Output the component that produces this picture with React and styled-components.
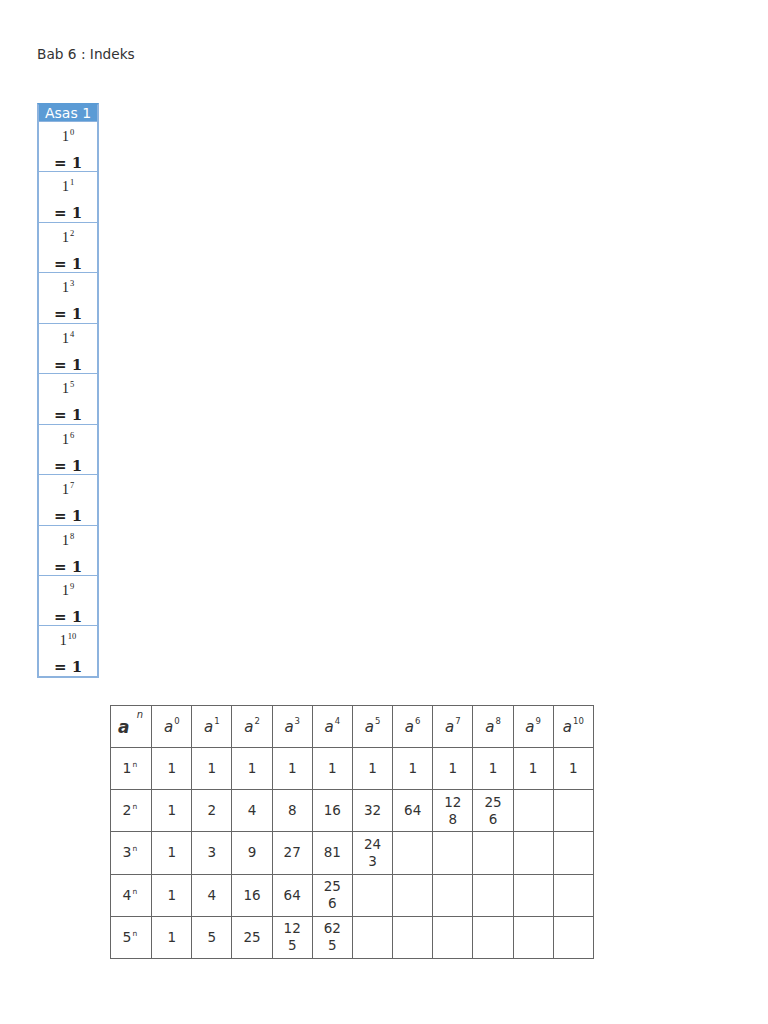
import React from 'react'
import styled, { createGlobalStyle } from 'styled-components'

const GlobalStyle = createGlobalStyle`
  body {
    margin: 0;
    background: #fff;
    font-family: "DejaVu Sans", Verdana, sans-serif;
    color: #333;
  }
`

const Page = styled.div`
  width: 768px;
  min-height: 1024px;
  padding: 46px 0 0 37px;
  box-sizing: border-box;
`

const Title = styled.div`
  font-size: 13.7px;
  line-height: 16px;
  color: #333;
`

const Asas = styled.div`
  margin-top: 41px;
  width: 62px;
  box-sizing: border-box;
  border: 2px solid #8db3de;
  border-top-color: #5b9bd5;
  display: flex;
  flex-direction: column;
`

const AsasHead = styled.div`
  background: #5b9bd5;
  color: #fff;
  font-size: 14px;
  height: 16px;
  line-height: 16px;
  text-align: center;
`

const AsasRow = styled.div`
  height: 50.45px;
  box-sizing: border-box;
  border-top: 1.5px solid #8db3de;
  display: flex;
  flex-direction: column;
  align-items: center;
  color: #222;
`

const Power = styled.div`
  font-size: 14px;
  line-height: 16px;
  padding-top: 2px;
  font-family: "Liberation Serif", serif;
`

const Sup = styled.sup`
  font-size: 8.5px;
  vertical-align: 6px;
  margin-left: 1px;
`

const Result = styled.div`
  font-family: "DejaVu Serif", "Liberation Serif", serif;
  font-weight: bold;
  font-size: 15px;
  line-height: 18px;
  margin-top: 9px;
`

const GridTable = styled.table`
  margin: 27px 0 0 73px;
  border-collapse: collapse;
  table-layout: fixed;
  width: 484px;
  border: 1px solid #555;
`

const Cell = styled.td`
  width: ${p => (p.$first ? 41 : 40)}px;
  height: 42.2px;
  border: 1px solid #666;
  padding: 0 7px;
  box-sizing: border-box;
  text-align: center;
  vertical-align: middle;
  font-size: 13.5px;
  line-height: 17px;
  word-break: break-all;
  color: #333;
`

const HeadCell = styled(Cell)`
  font-style: italic;
  font-size: 15px;
  padding: 0 0 4px;
`

const CornerCell = styled(Cell)`
  padding: 0;
  position: relative;
`

const CornerA = styled.span`
  position: absolute;
  left: 7px;
  top: 13px;
  font-weight: bold;
  font-style: italic;
  font-size: 17px;
`

const CornerN = styled.span`
  position: absolute;
  right: 8px;
  top: 0;
  font-style: italic;
  font-size: 10px;
`

const HeadSup = styled.sup`
  font-size: 8.5px;
  font-style: normal;
  vertical-align: 8px;
  margin-left: 1px;
`

const RowHead = styled(Cell)`
  text-align: right;
  padding: 0 14px 4px 0;
  font-size: 14px;
`

const RowSup = styled.sup`
  font-size: 7.5px;
  vertical-align: 6px;
  margin-left: 1px;
`

const rows = [
  ['1', '1', '1', '1', '1', '1', '1', '1', '1', '1', '1'],
  ['1', '2', '4', '8', '16', '32', '64', '128', '256', '', ''],
  ['1', '3', '9', '27', '81', '243', '', '', '', '', ''],
  ['1', '4', '16', '64', '256', '', '', '', '', '', ''],
  ['1', '5', '25', '125', '625', '', '', '', '', '', ''],
]

export default function App() {
  const exps = Array.from({ length: 11 }, (_, i) => i)
  return (
    <Page>
      <GlobalStyle />
      <Title>Bab 6 : Indeks</Title>

      <Asas>
        <AsasHead>Asas 1</AsasHead>
        {exps.map(n => (
          <AsasRow key={n}>
            <Power>
              1<Sup>{n}</Sup>
            </Power>
            <Result>= 1</Result>
          </AsasRow>
        ))}
      </Asas>

      <GridTable>
        <tbody>
          <tr>
            <CornerCell $first>
              <CornerA>a</CornerA>
              <CornerN>n</CornerN>
            </CornerCell>
            {exps.map(n => (
              <HeadCell key={n}>
                a<HeadSup>{n}</HeadSup>
              </HeadCell>
            ))}
          </tr>
          {rows.map((r, i) => (
            <tr key={i}>
              <RowHead $first>
                {i + 1}
                <RowSup>n</RowSup>
              </RowHead>
              {r.map((v, j) => (
                <Cell key={j}>{v}</Cell>
              ))}
            </tr>
          ))}
        </tbody>
      </GridTable>
    </Page>
  )
}
